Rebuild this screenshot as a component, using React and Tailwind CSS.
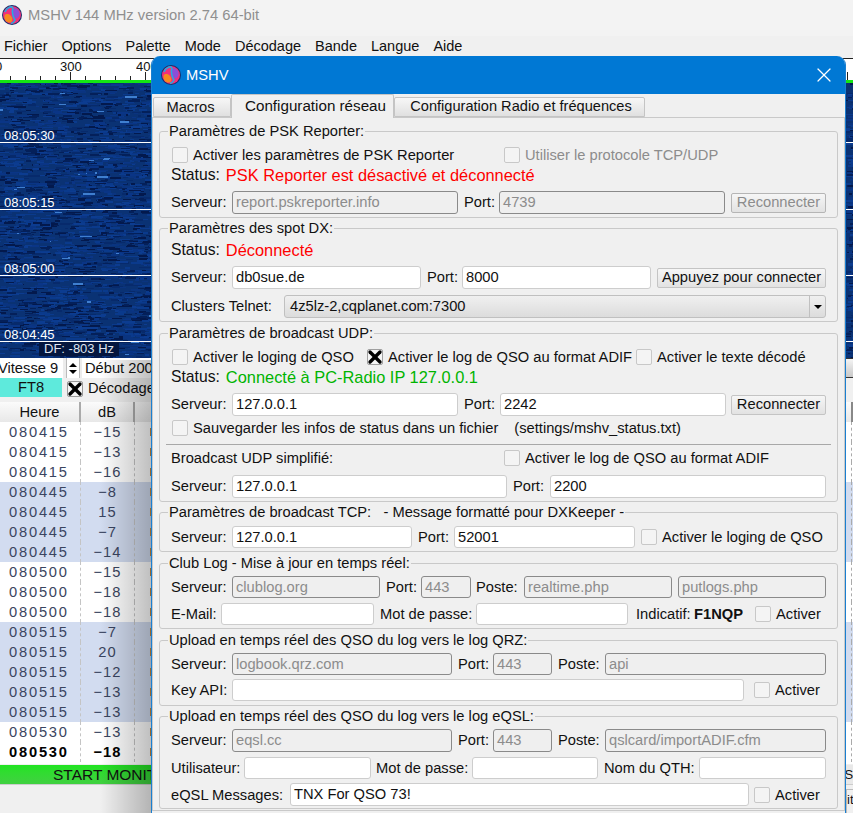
import React from 'react';
import { X } from 'lucide-react';

const rows = [
  ['080415', '−15', 0], ['080415', '−13', 0], ['080415', '−16', 0],
  ['080445', '−8', 1], ['080445', '15', 1], ['080445', '−7', 1], ['080445', '−14', 1],
  ['080500', '−15', 0], ['080500', '−18', 0], ['080500', '−18', 0],
  ['080515', '−7', 1], ['080515', '20', 1], ['080515', '−12', 1], ['080515', '−13', 1], ['080515', '−13', 1],
  ['080530', '−13', 0], ['080530', '−18', 2],
];

// deterministic noise for the waterfall, only the parts not under the dialog
function streaks() {
  const out = [];
  let s = 7;
  const rnd = () => {
    s = (s * 16807) % 2147483647;
    return s / 2147483647;
  };
  const colors = ['#0a3a8c', '#072a6c', '#04205a', '#0c3c90', '#0a3480', '#03194d', '#0a3586'];
  for (let i = 0; i < 3600; i++) {
    const right = i % 16 === 0;
    out.push(
      <rect
        key={i}
        x={right ? 846 + Math.floor(rnd() * 7) : Math.floor(rnd() * 155) - 4}
        y={Math.floor(rnd() * 275)}
        width={3 + Math.floor(rnd() * 10)}
        height={1 + Math.floor(rnd() * 2)}
        fill={i % 120 === 1 ? '#3f7fd0' : colors[Math.floor(rnd() * 7)]}
      />
    );
  }
  return out;
}

function Logo({ size = 20 }) {
  return (
    <svg width={size} height={size} viewBox="0 0 20 20" className="shrink-0">
      <circle cx="10" cy="10" r="10" fill="#1b2f6b" />
      <circle cx="10" cy="10" r="9" fill="#f0307a" />
      <path d="M2.5 11 C2 15 5 18 8 17.5 C11 17 11 13 8.5 10.5 C6.5 8.5 3 8.5 2.5 11 Z" fill="#f58a1f" />
      <path d="M11.5 3.5 C15 2.5 18 6 17.5 9.5 C17 13 14 14.5 12.5 12.5 C11 10.5 9.5 5 11.5 3.5 Z" fill="#8a4fd8" />
      <path d="M3 7 C5 2 10 0.8 11 3 C9.5 6 11 13 13 15 C12 17 11 18 9 18.6" fill="none" stroke="#28a9e0" strokeWidth="1.6" />
    </svg>
  );
}

function Label({ children, className = '' }) {
  return <span className={`whitespace-nowrap text-[#111] ${className}`}>{children}</span>;
}

function Field({ value = '', off, short, className = '' }) {
  return (
    <div className={`rounded-[3px] border px-[3px] whitespace-nowrap overflow-hidden ${short ? 'h-[22px] leading-[20px]' : 'h-[23px] leading-[21px]'} ${off ? 'border-[#8a8a8a] bg-[#efefef] text-[#8c8c8c]' : 'border-[#cdcdcd] bg-white text-[#111]'} ${className}`}>
      {value}
    </div>
  );
}

function Check({ on, label, off, className = '' }) {
  return (
    <div className={`flex items-center gap-[5px] whitespace-nowrap ${className}`}>
      <div className={`flex h-4 w-4 shrink-0 items-center justify-center rounded-[2px] border ${on ? 'border-[#a0a0a0] bg-[#f5f5f5]' : 'border-[#c8c8c8] bg-[#f4f4f4]'}`}>
        {on && <X size={20} strokeWidth={4} className="shrink-0 text-black" />}
      </div>
      {label && <span className={off ? 'text-[#8c8c8c]' : 'text-[#111]'}>{label}</span>}
    </div>
  );
}

function Btn({ children, off, className = '' }) {
  return (
    <div className={`flex h-[20px] items-center justify-center rounded-[2px] border whitespace-nowrap bg-gradient-to-b from-[#f6f6f6] to-[#e2e2e2] ${off ? 'border-[#b5b5b5] text-[#8c8c8c]' : 'border-[#c4c4c4] text-[#111]'} ${className}`}>
      {children}
    </div>
  );
}

function Group({ title, className = '', children }) {
  return (
    <fieldset className={`relative mx-[6px] shrink-0 rounded-[3px] border border-[#c9c9c9] pl-[11px] pr-[10px] ${className}`}>
      <legend className="ml-[-3px] px-[1px] leading-[14px] whitespace-pre text-[#111]">{title}</legend>
      {children}
    </fieldset>
  );
}

function Status({ color, children }) {
  return (
    <div className="flex h-[20px] items-center gap-[6px]">
      <span className="text-[15.7px] text-[#111]">Status:</span>
      <span className={`text-[16.4px] ${color}`}>{children}</span>
    </div>
  );
}

function Dialog() {
  return (
    <div className="absolute left-[151px] top-[56px] h-[757px] w-[695px] overflow-hidden rounded-t-[9px] border-x border-[#1a7fd0] bg-[#f0f0f0] font-['Liberation_Sans',sans-serif] text-[14.7px]">
      <div className="flex h-[38px] items-center bg-[#0078d4] pl-[9px] pr-[9px] text-white">
        <Logo />
        <span className="ml-[5px]">MSHV</span>
        <X size={24} strokeWidth={1.2} className="ml-auto" />
      </div>
      <div className="flex h-[23px] items-end pl-[1px] text-[#111]">
        <div className="flex h-[20px] w-[78px] items-center justify-center rounded-t-[2px] border border-[#c4c4c4] bg-gradient-to-b from-[#f7f7f7] to-[#e0e0e0] pr-[3px]">Macros</div>
        <div className="z-10 mb-[-1px] flex h-[24px] w-[163px] items-center justify-center rounded-t-[2px] border border-b-0 border-[#c4c4c4] bg-[#f0f0f0] pl-[6px] text-[15.2px] whitespace-nowrap">Configuration réseau</div>
        <div className="flex h-[20px] w-[251px] items-center justify-center rounded-t-[2px] border border-[#c4c4c4] bg-gradient-to-b from-[#f7f7f7] to-[#e0e0e0] pl-[3px] text-[14.6px] whitespace-nowrap">Configuration Radio et fréquences</div>
      </div>
      <div className="flex h-[694px] flex-col border border-[#c9c9c9] pt-[6px]">
        <Group title="Paramètres de PSK Reporter:" className="h-[94px]">
          <div className="mt-[7px] flex h-[20px] items-center">
            <Check label="Activer les paramètres de PSK Reporter" className="ml-[1px] w-[332px]" />
            <Check off label="Utiliser le protocole TCP/UDP" />
          </div>
          <Status color="text-[#ff0000]">PSK Reporter est désactivé et déconnecté</Status>
          <div className="mt-[6px] flex items-center">
            <Label className="w-[61px]">Serveur:</Label>
            <Field off value="report.pskreporter.info" className="w-[226px]" />
            <Label className="ml-[6px] w-[35px]">Port:</Label>
            <Field off value="4739" className="w-[226px]" />
            <Btn off className="ml-[6px] w-[95px]">Reconnecter</Btn>
          </div>
        </Group>
        <Group title="Paramètres des spot DX:" className="mt-[3px] h-[101px]">
          <div className="mt-[5px]">
            <Status color="text-[#ff0000]">Déconnecté</Status>
          </div>
          <div className="mt-[6px] flex items-center">
            <Label className="w-[61px]">Serveur:</Label>
            <Field value="db0sue.de" className="w-[189px]" />
            <Label className="ml-[6px] w-[35px]">Port:</Label>
            <Field value="8000" className="w-[189px]" />
            <Btn className="ml-[6px] w-[169px]">Appuyez pour connecter</Btn>
          </div>
          <div className="mt-[6px] flex items-center">
            <Label className="w-[113px]">Clusters Telnet:</Label>
            <div className="flex h-[23px] w-[542px] items-center rounded-[3px] border border-[#c0c0c0] bg-gradient-to-b from-[#f0f0f0] to-[#dcdcdc] pl-[5px] text-[#111]">
              <span>4z5lz-2,cqplanet.com:7300</span>
              <div className="ml-auto flex h-full w-[16px] items-center justify-center border-l border-[#c0c0c0]">
                <div className="h-0 w-0 border-x-[4px] border-t-[4px] border-x-transparent border-t-black" />
              </div>
            </div>
          </div>
        </Group>
        <Group title="Paramètres de broadcast UDP:" className="mt-[4px] h-[176px]">
          <div className="mt-[7px] flex h-[20px] items-center">
            <Check label="Activer le loging de QSO" className="ml-[1px] w-[195px]" />
            <Check on label="Activer le log de QSO au format ADIF" className="w-[269px]" />
            <Check label="Activer le texte décodé" />
          </div>
          <Status color="text-[#00b400]">Connecté à PC-Radio IP 127.0.0.1</Status>
          <div className="mt-[6px] flex items-center">
            <Label className="w-[61px]">Serveur:</Label>
            <Field value="127.0.0.1" className="w-[226px]" />
            <Label className="ml-[6px] w-[36px]">Port:</Label>
            <Field value="2242" className="w-[226px]" />
            <Btn className="ml-[5px] w-[95px]">Reconnecter</Btn>
          </div>
          <div className="mt-[2px] flex h-[20px] items-center">
            <Check label="Sauvegarder les infos de status dans un fichier" className="ml-[1px]" />
            <Label className="ml-[16px]">(settings/mshv_status.txt)</Label>
          </div>
          <div className="mt-[6px] mr-[-4px] ml-[-5px] h-px bg-[#a8a8a8]" />
          <div className="mt-[3px] flex h-[20px] items-center">
            <Label className="w-[333px]">Broadcast UDP simplifié:</Label>
            <Check label="Activer le log de QSO au format ADIF" />
          </div>
          <div className="mt-[7px] flex items-center">
            <Label className="w-[61px]">Serveur:</Label>
            <Field value="127.0.0.1" className="w-[275px]" />
            <Label className="ml-[6px] w-[37px]">Port:</Label>
            <Field value="2200" className="w-[276px]" />
          </div>
        </Group>
        <Group title="Paramètres de broadcast TCP:   - Message formatté pour DXKeeper -" className="mt-[3px] h-[47px]">
          <div className="mt-[7px] flex items-center">
            <Label className="w-[61px]">Serveur:</Label>
            <Field short value="127.0.0.1" className="w-[180px]" />
            <Label className="ml-[6px] w-[36px]">Port:</Label>
            <Field short value="52001" className="w-[181px]" />
            <Check label="Activer le loging de QSO" className="ml-[6px]" />
          </div>
        </Group>
        <Group title="Club Log - Mise à jour en temps réel:" className="mt-[4px] h-[73px]">
          <div className="mt-[6px] flex items-center">
            <Label className="w-[61px]">Serveur:</Label>
            <Field short off value="clublog.org" className="w-[148px]" />
            <Label className="ml-[6px] w-[35px]">Port:</Label>
            <Field short off value="443" className="w-[50px]" />
            <Label className="ml-[5px] w-[48px]">Poste:</Label>
            <Field short off value="realtime.php" className="w-[148px]" />
            <Field short off value="putlogs.php" className="ml-[6px] w-[148px]" />
          </div>
          <div className="mt-[5px] flex items-center">
            <Label className="w-[50px]">E-Mail:</Label>
            <Field short className="w-[153px]" />
            <Label className="ml-[6px] w-[96px]">Mot de passe:</Label>
            <Field short className="w-[152px]" />
            <Label className="ml-[8px] w-[58px]">Indicatif:</Label>
            <span className="w-[50px] font-bold text-[#111]">F1NQP</span>
            <Check label="Activer" className="ml-[11px]" />
          </div>
        </Group>
        <Group title="Upload en temps réel des QSO du log vers le log QRZ:" className="mt-[4px] h-[73px]">
          <div className="mt-[6px] flex items-center">
            <Label className="w-[61px]">Serveur:</Label>
            <Field short off value="logbook.qrz.com" className="w-[220px]" />
            <Label className="ml-[6px] w-[35px]">Port:</Label>
            <Field short off value="443" className="w-[59px]" />
            <Label className="ml-[6px] w-[47px]">Poste:</Label>
            <Field short off value="api" className="w-[221px]" />
          </div>
          <div className="mt-[4px] flex items-center">
            <Label className="w-[61px]">Key API:</Label>
            <Field short className="w-[512px]" />
            <Check label="Activer" className="ml-[10px]" />
          </div>
        </Group>
        <Group title="Upload en temps réel des QSO du log vers le log eQSL:" className="mt-[3px] h-[100px]">
          <div className="mt-[6px] flex items-center">
            <Label className="w-[61px]">Serveur:</Label>
            <Field off value="eqsl.cc" className="w-[220px]" />
            <Label className="ml-[6px] w-[35px]">Port:</Label>
            <Field off value="443" className="w-[59px]" />
            <Label className="ml-[6px] w-[47px]">Poste:</Label>
            <Field off value="qslcard/importADIF.cfm" className="w-[221px]" />
          </div>
          <div className="mt-[5px] flex items-center">
            <Label className="w-[73px]">Utilisateur:</Label>
            <Field short className="w-[127px]" />
            <Label className="ml-[5px] w-[96px]">Mot de passe:</Label>
            <Field short className="w-[126px]" />
            <Label className="ml-[6px] w-[95px]">Nom du QTH:</Label>
            <Field short className="w-[127px]" />
          </div>
          <div className="mt-[4px] flex items-center">
            <Label className="w-[119px]">eQSL Messages:</Label>
            <Field value="TNX For QSO 73!" className="w-[459px]" />
            <Check label="Activer" className="ml-[5px]" />
          </div>
        </Group>
      </div>
    </div>
  );
}

function MainWindow() {
  return (
    <div className="flex h-[813px] w-[853px] flex-col overflow-hidden bg-[#f0f0f0] font-['Liberation_Sans',sans-serif] text-[14.7px] text-[#111]">
      <div className="flex h-[36px] shrink-0 items-center bg-[#f3f3f3] pb-[7px] pl-[2px]">
        <Logo />
        <span className="ml-[6px] mt-[2px] text-[14.75px] text-[#8f8f8f]">MSHV 144 MHz version 2.74 64-bit</span>
      </div>
      <div className="flex h-[22px] shrink-0 items-center gap-[14px] bg-[#f0f0f0] pl-[4px] text-[14.5px]">
        {['Fichier', 'Options', 'Palette', 'Mode', 'Décodage', 'Bande', 'Langue', 'Aide'].map((m) => (
          <span key={m}>{m}</span>
        ))}
      </div>
      <div className="relative h-[25px] shrink-0 border-t border-[#222] bg-white">
        <span className="absolute left-[-5px] top-0 text-[13px] leading-[16px]">0</span>
        <span className="absolute left-[60px] top-0 text-[13px] leading-[16px]">300</span>
        <span className="absolute left-[136px] top-0 w-[15px] overflow-hidden text-[13px] leading-[16px]">400</span>
        <svg className="absolute left-0 top-[13px]" width="853" height="8">
          {[...Array.from({ length: 10 }, (_, i) => 10 + i * 15), 847].map((x) => (
            <line key={x} x1={x + 0.5} x2={x + 0.5} y1={x === 70 || x === 145 || x === 847 ? 0 : 4} y2="8" stroke="#222" />
          ))}
        </svg>
        <div className="absolute bottom-0 left-0 h-[3px] w-full bg-[#14e614]" />
      </div>
      <div className="relative h-[275px] shrink-0 bg-[#0a3274]">
        <svg className="absolute inset-0" width="853" height="275">{streaks()}</svg>
        {[
          ['08:05:30', 'top-[46px]', 'top-[59px]'],
          ['08:05:15', 'top-[113px]', 'top-[126px]'],
          ['08:05:00', 'top-[179px]', 'top-[192px]'],
          ['08:04:45', 'top-[245px]', 'top-[258px]'],
        ].map(([t, a, b]) => (
          <React.Fragment key={t}>
            <span className={`absolute left-[4px] text-[13px] leading-[14px] text-white ${a}`}>{t}</span>
            <div className={`absolute left-0 h-px w-full bg-white ${b}`} />
          </React.Fragment>
        ))}
        <div className="absolute left-[39px] top-[259px] bg-[#04163f] px-[5px] text-[13px] leading-[14px] text-[#dfe4f0]">DF: -803 Hz</div>
      </div>
      <div className="flex h-[20px] shrink-0 items-center overflow-hidden bg-[#ececec]">
        <span className="h-full w-[63px] bg-white leading-[20px] whitespace-nowrap indent-[-2px]">Vitesse 9</span>
        <div className="ml-[3px] flex h-full w-[14px] flex-col items-center justify-center gap-[3px] border-x border-[#bbb] bg-white">
          <div className="h-0 w-0 border-x-[4px] border-b-[4px] border-x-transparent border-b-black" />
          <div className="h-0 w-0 border-x-[4px] border-t-[4px] border-x-transparent border-t-black" />
        </div>
        <span className="ml-[2px] h-full w-[71px] overflow-hidden bg-white pl-[3px] leading-[20px] whitespace-nowrap">Début 200</span>
        <div className="ml-auto h-full w-[7px] border-y border-[#333] bg-gradient-to-b from-[#f4f4f4] to-[#c8c8c8]" />
      </div>
      <div className="flex h-[24px] shrink-0 items-start">
        <div className="flex h-[19px] w-[62px] items-center justify-center bg-[#5eeadc]">FT8</div>
        <div className="ml-[5px] mt-[3px] flex h-4 w-4 items-center justify-center rounded-[2px] border border-[#999] bg-[#f5f5f5]">
          <X size={20} strokeWidth={4} className="shrink-0 text-black" />
        </div>
        <span className="ml-[5px] whitespace-nowrap leading-[20px]">Décodage</span>
      </div>
      <div className="flex h-[20px] shrink-0 bg-gradient-to-b from-[#fbfbfb] to-[#e8e8e8]">
        <div className="flex w-[81px] items-center justify-center border-r-2 border-[#aaa]">Heure</div>
        <div className="flex w-[54px] items-center justify-center border-r-2 border-[#aaa]">dB</div>
        <div className="ml-auto w-[2px] bg-[#888]" />
      </div>
      <div className="h-[342px] shrink-0 bg-white">
        {rows.map(([t, db, k], i) => (
          <div key={i} className={`flex h-[20px] items-center ${k === 1 ? 'bg-[#d2dcf0]' : 'bg-white'} ${k === 2 ? 'font-bold text-black' : 'text-[#3a4560]'}`}>
            <div className="h-full w-[81px] border-r border-dashed border-[#c4c4c4] pl-[9px] leading-[20px] tracking-[1.8px]">{t}</div>
            <div className="h-full w-[54px] border-r border-dashed border-[#c4c4c4] text-center leading-[20px] tracking-[1px]">{db}</div>
            <div className="ml-[15px] h-[8px] w-[2px] bg-[#c88a40]" />
            <div className="ml-auto h-full w-[2px] border-l border-dashed border-[#aaa]" />
          </div>
        ))}
      </div>
      <div className="mt-[1px] flex h-[19px] shrink-0 items-center">
        <div className="flex h-full w-[846px] items-center bg-gradient-to-b from-[#20e420] to-[#40d040] pl-[53px] text-[15.5px] whitespace-nowrap">
          <span className="w-[98px] overflow-hidden">START MONITOR</span>
        </div>
        <div className="h-full grow overflow-hidden bg-[#e8e8e8] text-[13px] whitespace-nowrap">SS</div>
      </div>
      <div className="flex grow border-t border-[#ccc] bg-[#f0f0f0]">
        <div className="ml-auto mt-[4px] w-[7px] overflow-hidden border-l border-t border-[#bbb] text-[13px] whitespace-nowrap">it</div>
      </div>
    </div>
  );
}

export default function App() {
  return (
    <div className="relative h-[813px] w-[853px] overflow-hidden">
      <MainWindow />
      <div className="absolute left-[100px] top-[360px] h-[453px] w-[51px] bg-gradient-to-r from-transparent to-black/25" />
      <Dialog />
    </div>
  );
}
